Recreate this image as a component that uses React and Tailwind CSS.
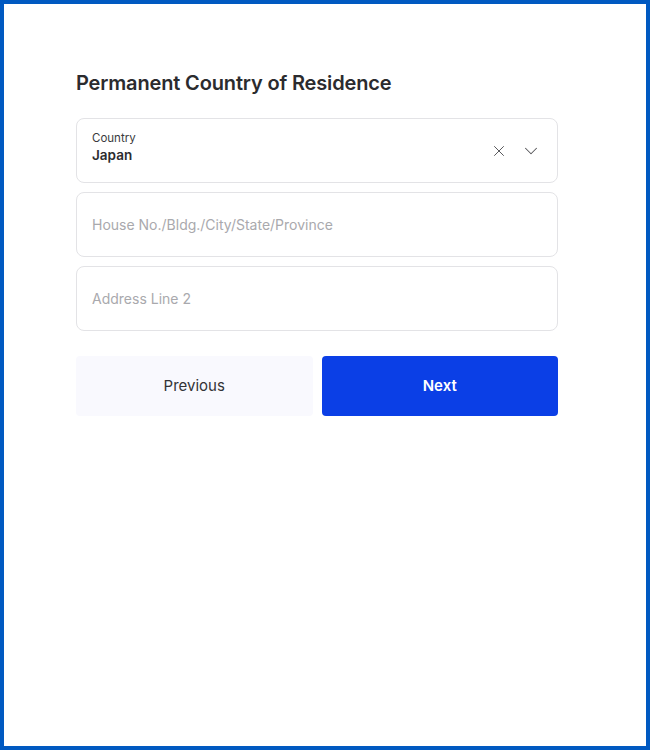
import { X, ChevronDown } from "lucide-react";

// Address step of the onboarding form
function TextField({ placeholder }) {
  return (
    <div className="h-[65px] rounded-lg border border-[#e3e3e6] flex items-center px-[15px]">
      <input
        className="w-full outline-none bg-transparent text-[14px] text-[#2d2d2d] placeholder:text-[#a9a9ad]"
        placeholder={placeholder}
      />
    </div>
  );
}

export default function App() {
  return (
    <div
      className="w-[650px] h-[750px] border-4 border-[#0059c1] bg-white"
      style={{ fontFamily: "Inter, 'Noto Sans', sans-serif" }}
    >
      <div className="pt-[66px] pl-[72px] w-[554px]">
        <h2 className="text-[20px] font-semibold text-[#2b2b2e] leading-[26px] tracking-[-0.15px]">
          Permanent Country of Residence
        </h2>

        <div className="mt-[22px] flex flex-col gap-[9px]">
          {/* Country select */}
          <div className="h-[65px] rounded-lg border border-[#e3e3e6] flex items-center pl-[15px] pr-[15px]">
            <div className="flex-1 flex flex-col pb-[7px]">
              <span className="text-[11.5px] leading-[16px] text-[#3a3a3d]">Country</span>
              <span className="text-[13.5px] leading-[18px] font-semibold text-[#2b2b2e]">Japan</span>
            </div>
            <div className="flex items-center gap-[12px] text-[#555558]">
              <X size={18} strokeWidth={1.3} />
              <ChevronDown size={22} strokeWidth={1.1} />
            </div>
          </div>

          <TextField placeholder="House No./Bldg./City/State/Province" />
          <TextField placeholder="Address Line 2" />
        </div>

        <div className="mt-[25px] grid grid-cols-2 gap-[9px]">
          <button className="h-[60px] rounded bg-[#f9f9fe] text-[15px] text-[#333336]">
            Previous
          </button>
          <button className="h-[60px] rounded bg-[#0b3fe6] text-[15px] font-semibold text-white">
            Next
          </button>
        </div>
      </div>
    </div>
  );
}
